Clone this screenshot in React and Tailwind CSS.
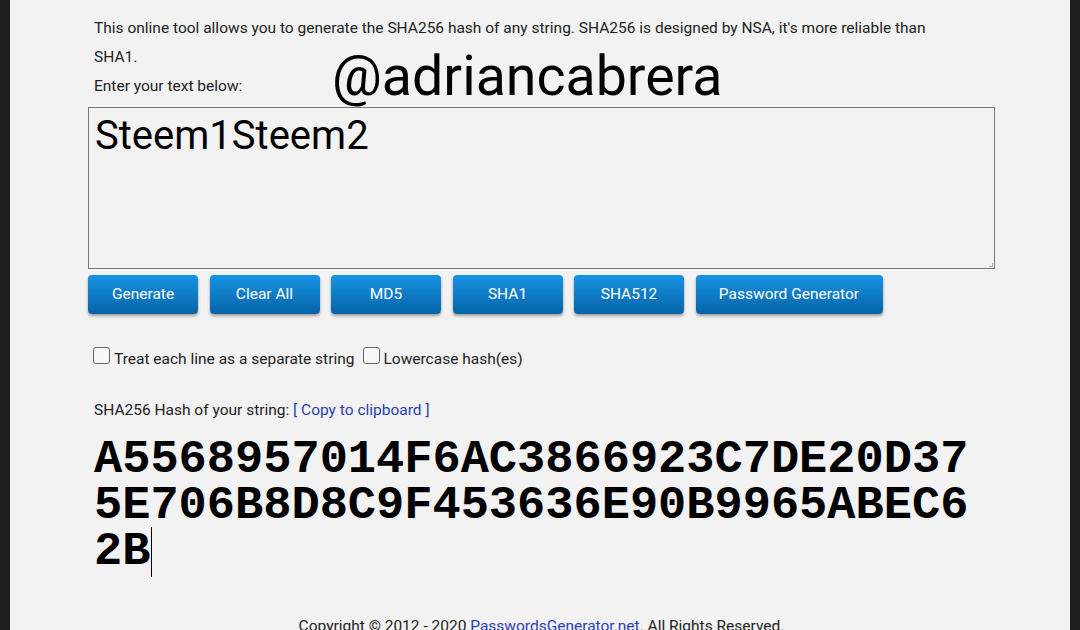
import React from "react";

const buttons = ["Generate", "Clear All", "MD5", "SHA1", "SHA512", "Password Generator"];

const hash = "A5568957014F6AC3866923C7DE20D375E706B8D8C9F453636E90B9965ABEC62B";

export default function App() {
  return (
    <div className="flex h-[630px] w-[1080px] overflow-hidden bg-[#1f1f1f] font-['Roboto',sans-serif] text-[#222]">
      <div className="w-[10px] shrink-0" />
      <main className="relative flex-1 bg-[#f2f2f2] pl-[78px] pr-[75px] pt-[14px]">
        <p className="w-[860px] pl-[6px] text-[15.5px] leading-[29px]">
          This online tool allows you to generate the SHA256 hash of any string. SHA256 is designed by NSA, it's more reliable than SHA1.
        </p>
        <p className="pl-[6px] text-[15.5px] leading-[29px]">Enter your text below:</p>

        {/* watermark */}
        <span className="absolute left-[322px] top-[45px] text-[55.5px] leading-[64px] text-black">
          @adriancabrera
        </span>

        <div className="relative mt-[6px] h-[162px] w-[907px] border border-[#777] px-[6px] pt-[5px] text-[40px] leading-[46px] text-black">
          Steem1Steem2
          <span className="absolute bottom-[1px] right-[1px] h-[4px] w-[4px] border-b border-r border-[#aaa]" />
        </div>

        <div className="mt-[6px] flex gap-[11.5px]">
          {buttons.map((b) => (
            <button
              key={b}
              className={`h-[39px] rounded-[4px] bg-gradient-to-b from-[#1794e6] to-[#0764a6] text-[15.5px] text-white shadow-[0_2px_3px_rgba(0,0,0,0.35)] ${
                b === "Password Generator" ? "w-[187px]" : "w-[110px]"
              }`}
            >
              {b}
            </button>
          ))}
        </div>

        <div className="mt-[33px] flex items-baseline pl-[5px] text-[15.5px] leading-[20px]">
          <span className="mr-[4px] h-[17px] w-[17px] rounded-[3px] border border-[#666] bg-[#f7f7f7]" />
          <span>Treat each line as a separate string</span>
          <span className="ml-[9px] mr-[3px] h-[17px] w-[17px] rounded-[3px] border border-[#666] bg-[#f7f7f7]" />
          <span>Lowercase hash(es)</span>
        </div>

        <p className="mt-[31px] pl-[6px] text-[15.5px] leading-[20px]">
          SHA256 Hash of your string: <span className="text-[#2b3eb5]">[ Copy to clipboard ]</span>
        </p>

        <div className="mt-[17px] w-[890px] break-all pl-[6px] font-['Liberation_Mono',monospace] text-[47px] font-bold leading-[46px] text-black">
          {hash}
          <span className="relative">
            <span className="absolute left-[1px] top-[2px] h-[50px] w-px bg-black" />
          </span>
        </div>

        <p className="mt-[41px] text-center text-[15.5px] leading-[20px]">
          Copyright © 2012 - 2020 <span className="text-[#2b3eb5]">PasswordsGenerator.net</span>. All Rights Reserved.
        </p>
      </main>
      <div className="w-[10px] shrink-0" />
    </div>
  );
}
